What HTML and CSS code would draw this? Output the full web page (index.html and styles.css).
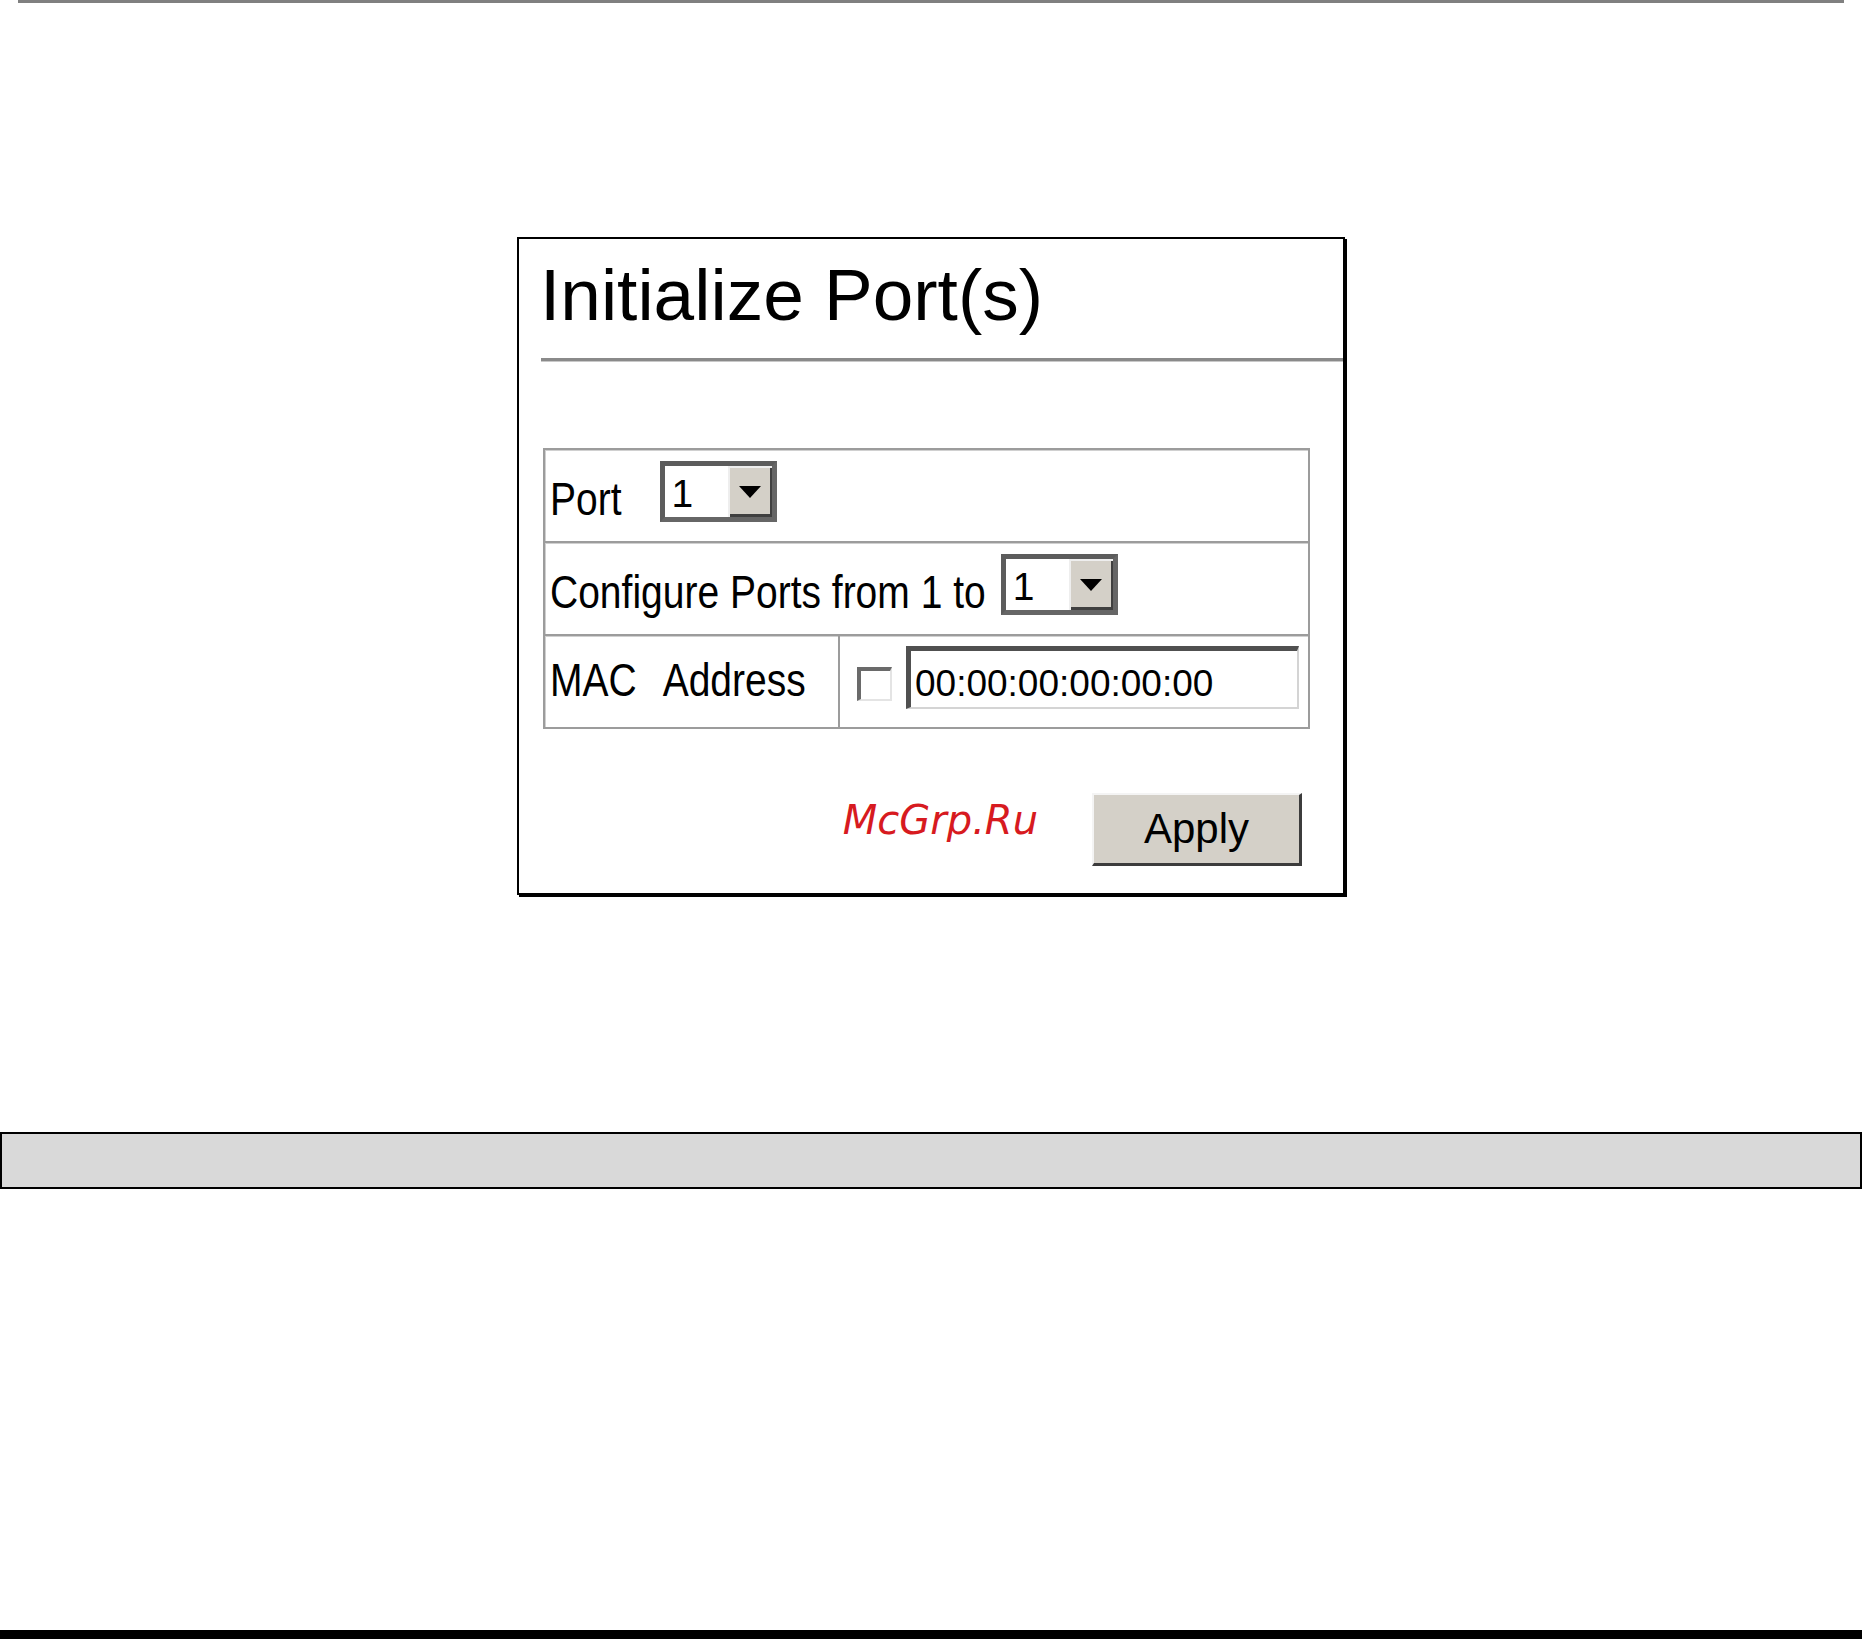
FILE: index.html
```html
<!DOCTYPE html>
<html lang="en">
<head>
<meta charset="utf-8">
<title>Initialize Port(s)</title>
<link rel="stylesheet" href="styles.css">
</head>
<body>
<div class="topline"></div>
<div class="panel">
  <h1 class="title">Initialize Port(s)</h1>
  <div class="rule"></div>
  <div class="form">
    <div class="row row-port">
      <span class="label">Port</span>
      <div class="select">
        <span class="val">1</span>
        <span class="btn"><svg width="22" height="12" viewBox="0 0 22 12"><path d="M0 0H22L11 12Z" fill="#000"/></svg></span>
      </div>
    </div>
    <div class="row row-range">
      <span class="label">Configure Ports from 1 to</span>
      <div class="select">
        <span class="val">1</span>
        <span class="btn"><svg width="22" height="12" viewBox="0 0 22 12"><path d="M0 0H22L11 12Z" fill="#000"/></svg></span>
      </div>
    </div>
    <div class="row row-mac">
      <div class="cell-left"><span class="label">MAC<span class="gap"></span>Address</span></div>
      <div class="cell-right">
        <input type="checkbox" class="check">
        <input type="text" class="mac" value="00:00:00:00:00:00">
      </div>
    </div>
  </div>
  <div class="actions">
    <span class="watermark">McGrp.Ru</span>
    <button class="apply">Apply</button>
  </div>
</div>
<div class="graybar"></div>
<div class="blackbar"></div>
</body>
</html>
```

FILE: styles.css
```css
html, body {
  margin: 0;
  padding: 0;
  background: #fff;
  font-family: "Liberation Sans", Arial, sans-serif;
  color: #000;
  overflow: hidden;
}

.topline {
  margin-left: 18px;
  width: 1826px;
  height: 3px;
  background: #808080;
}

.panel {
  margin: 234px 0 0 517px;
  width: 828px;
  height: 658px;
  box-sizing: border-box;
  border: 2px solid #000;
  box-shadow: 2px 2px 0 #000;
  display: flex;
  flex-direction: column;
}

.title {
  margin: 0;
  padding: 20px 0 0 21px;
  font-size: 73px;
  line-height: 72px;
  font-weight: normal;
  color: #000;
}

.rule {
  margin: 27px 0 0 22px;
  height: 4px;
  box-sizing: border-box;
  border-top: 3px solid #8a8a8a;
  border-bottom: 1px solid #c8c8c8;
}

.form {
  margin: 86px 0 0 24px;
  width: 767px;
  box-sizing: border-box;
  border: 2px solid #9c9c9c;
  box-shadow: inset 1px 1px 0 #d0d0d0;
}

.row {
  height: 91px;
  display: flex;
  align-items: center;
  padding-left: 5px;
}

.row + .row {
  border-top: 2px solid #9c9c9c;
  box-shadow: inset 0 1px 0 #d0d0d0;
}

.label {
  display: inline-block;
  font-size: 39px;
  line-height: 45px;
  white-space: nowrap;
  transform: scaleY(1.17);
  transform-origin: 0 36px;
  margin-top: 12px;
}

.gap {
  display: inline-block;
  width: 26px;
}

.select {
  display: flex;
  width: 117px;
  height: 61px;
  box-sizing: border-box;
  border: 5px solid #5c5c5c;
  border-right-color: #666;
  border-bottom-color: #666;
  margin-bottom: 8px;
  background: #fff;
}

.row-port .select {
  margin-left: 38px;
}

.row-range .select {
  margin-left: 15px;
}

.val {
  flex: 1;
  padding: 4px 0 0 7px;
  font-size: 39px;
  line-height: 47px;
}

.btn {
  width: 44px;
  display: flex;
  align-items: center;
  justify-content: center;
  background: #d4d0c8;
  box-shadow: inset 2px 2px 0 #eeeeee, inset -2px -3px 0 #404040;
}

.row-mac {
  padding-left: 0;
  align-items: stretch;
}

.cell-left {
  width: 295px;
  box-sizing: border-box;
  border-right: 2px solid #9c9c9c;
  padding-left: 5px;
  display: flex;
  align-items: center;
}

.cell-left .label {
  margin-top: 2px;
}

.cell-right {
  flex: 1;
  display: flex;
  align-items: center;
  padding-left: 17px;
  gap: 14px;
}

.check {
  appearance: none;
  -webkit-appearance: none;
  margin: 4px 0 0 0;
  width: 35px;
  height: 34px;
  box-sizing: border-box;
  border-style: solid;
  border-width: 4px 2px 2px 4px;
  border-color: #6a6a6a #e4e4e4 #e4e4e4 #6a6a6a;
  background: #fff;
}

.mac {
  appearance: none;
  -webkit-appearance: none;
  width: 393px;
  height: 63px;
  box-sizing: border-box;
  margin: 0 0 8px 0;
  border-style: solid;
  border-width: 5px 2px 2px 5px;
  border-color: #505050 #d4d4d4 #d4d4d4 #505050;
  padding: 10px 0 0 4px;
  font-family: "Liberation Sans", Arial, sans-serif;
  font-size: 37px;
  color: #000;
  background: #fff;
  outline: none;
}

.actions {
  display: flex;
  justify-content: flex-end;
  align-items: center;
  margin-top: 64px;
  padding-right: 41px;
}

.watermark {
  font-family: "DejaVu Sans", sans-serif;
  font-style: italic;
  font-size: 40px;
  line-height: 40px;
  color: #d71a20;
  margin: 0 54px 20px 0;
}

.apply {
  width: 210px;
  height: 73px;
  box-sizing: border-box;
  padding: 0;
  background: #d4d0c8;
  border-style: solid;
  border-width: 2px 3px 3px 2px;
  border-color: #f4f4f4 #3c3c3c #3c3c3c #f4f4f4;
  font-family: "Liberation Sans", Arial, sans-serif;
  font-size: 42px;
  color: #000;
}

.graybar {
  margin-top: 237px;
  height: 57px;
  box-sizing: border-box;
  border: 2px solid #000;
  background: #d9d9d9;
}

.blackbar {
  margin-top: 441px;
  height: 9px;
  background: #000;
}
```
